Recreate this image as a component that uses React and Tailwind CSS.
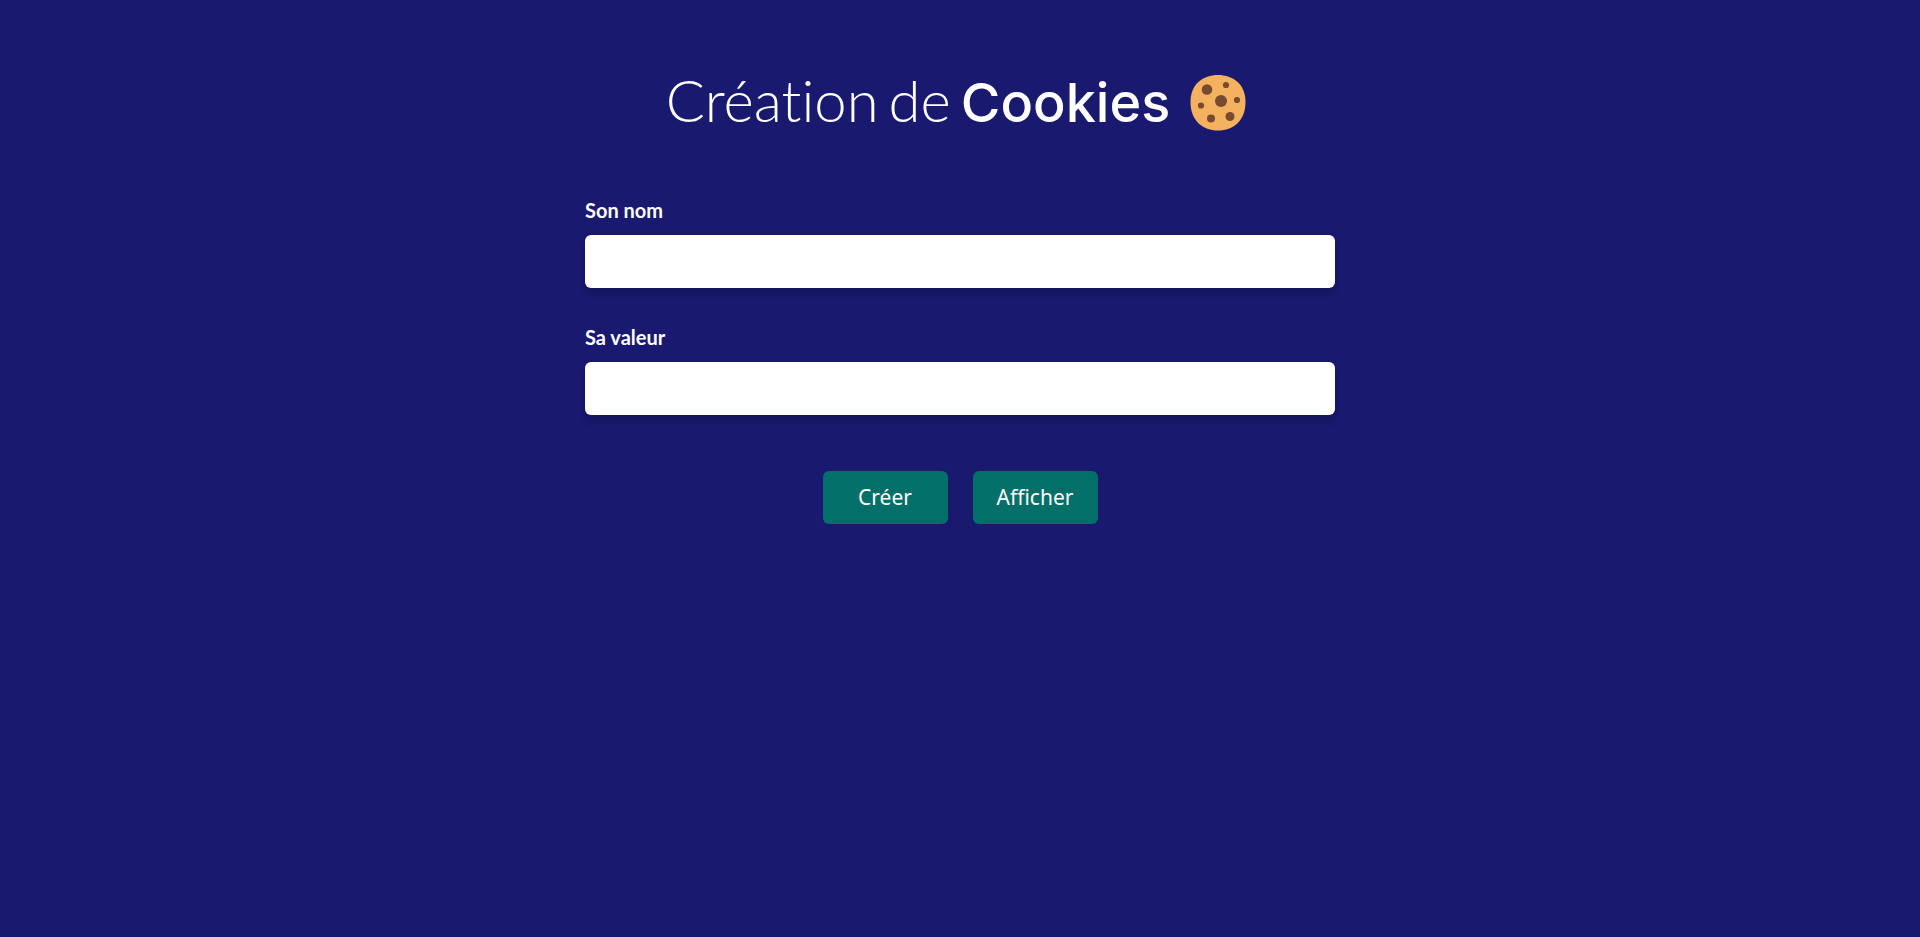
function CookieIcon() {
  return (
    <svg viewBox="0 0 56 56" className="size-14 shrink-0" role="img" aria-label="Cookie">
      <path
        d="M28 0C43 0 55.500 9 55.500 27C55.500 46 43 55.500 28 55.500C13 55.500 0.500 46 0.500 27C0.500 9 13 0 28 0Z"
        fill="#f4b160"
      />
      <g fill="#784a30">
        <circle cx="17" cy="14.500" r="5.300" />
        <circle cx="36" cy="10" r="3.100" />
        <circle cx="31" cy="26" r="6" />
        <circle cx="47" cy="25" r="3.100" />
        <circle cx="11" cy="30.500" r="3.100" />
        <circle cx="21" cy="43.500" r="4" />
        <circle cx="40" cy="41.500" r="4.500" />
      </g>
    </svg>
  );
}

function Field({ id, label }) {
  return (
    <div className="flex flex-col">
      <label htmlFor={id} className="mb-[13px] text-xl leading-6 font-bold">
        {label}
      </label>
      <input
        id={id}
        name={id}
        type="text"
        className="h-[53px] w-full rounded-md bg-white px-4 text-xl text-black shadow-[0_5px_10px_rgba(0,0,0,0.2)] outline-none"
      />
    </div>
  );
}

function ActionButton({ children }) {
  return (
    <button
      type="button"
      className="h-[53px] w-[125px] rounded-md bg-[#026f69] font-['Noto_Sans',sans-serif] text-[21px] text-white"
    >
      {children}
    </button>
  );
}

export default function App() {
  return (
    <main className="min-h-screen bg-[#191970] px-4 pt-[69px] font-[Lato,sans-serif] text-white">
      <h1 className="mr-2 flex items-end justify-center gap-5 text-[58px] leading-[62px] font-light [font-variant-ligatures:none]">
        <span className="flex items-baseline gap-2.5">
          <span>Création</span> <span>de</span>{" "}
          <strong className="font-[Inter,sans-serif] text-[54px] leading-[54px] font-medium">Cookies</strong>
        </span>
        <CookieIcon />
      </h1>
      <form className="mx-auto mt-[67px] flex max-w-[750px] flex-col gap-[37px]">
        <Field id="nom" label="Son nom" />
        <Field id="valeur" label="Sa valeur" />
        <div className="mt-[19px] flex justify-center gap-[25px]">
          <ActionButton>Créer</ActionButton>
          <ActionButton>Afficher</ActionButton>
        </div>
      </form>
    </main>
  );
}
